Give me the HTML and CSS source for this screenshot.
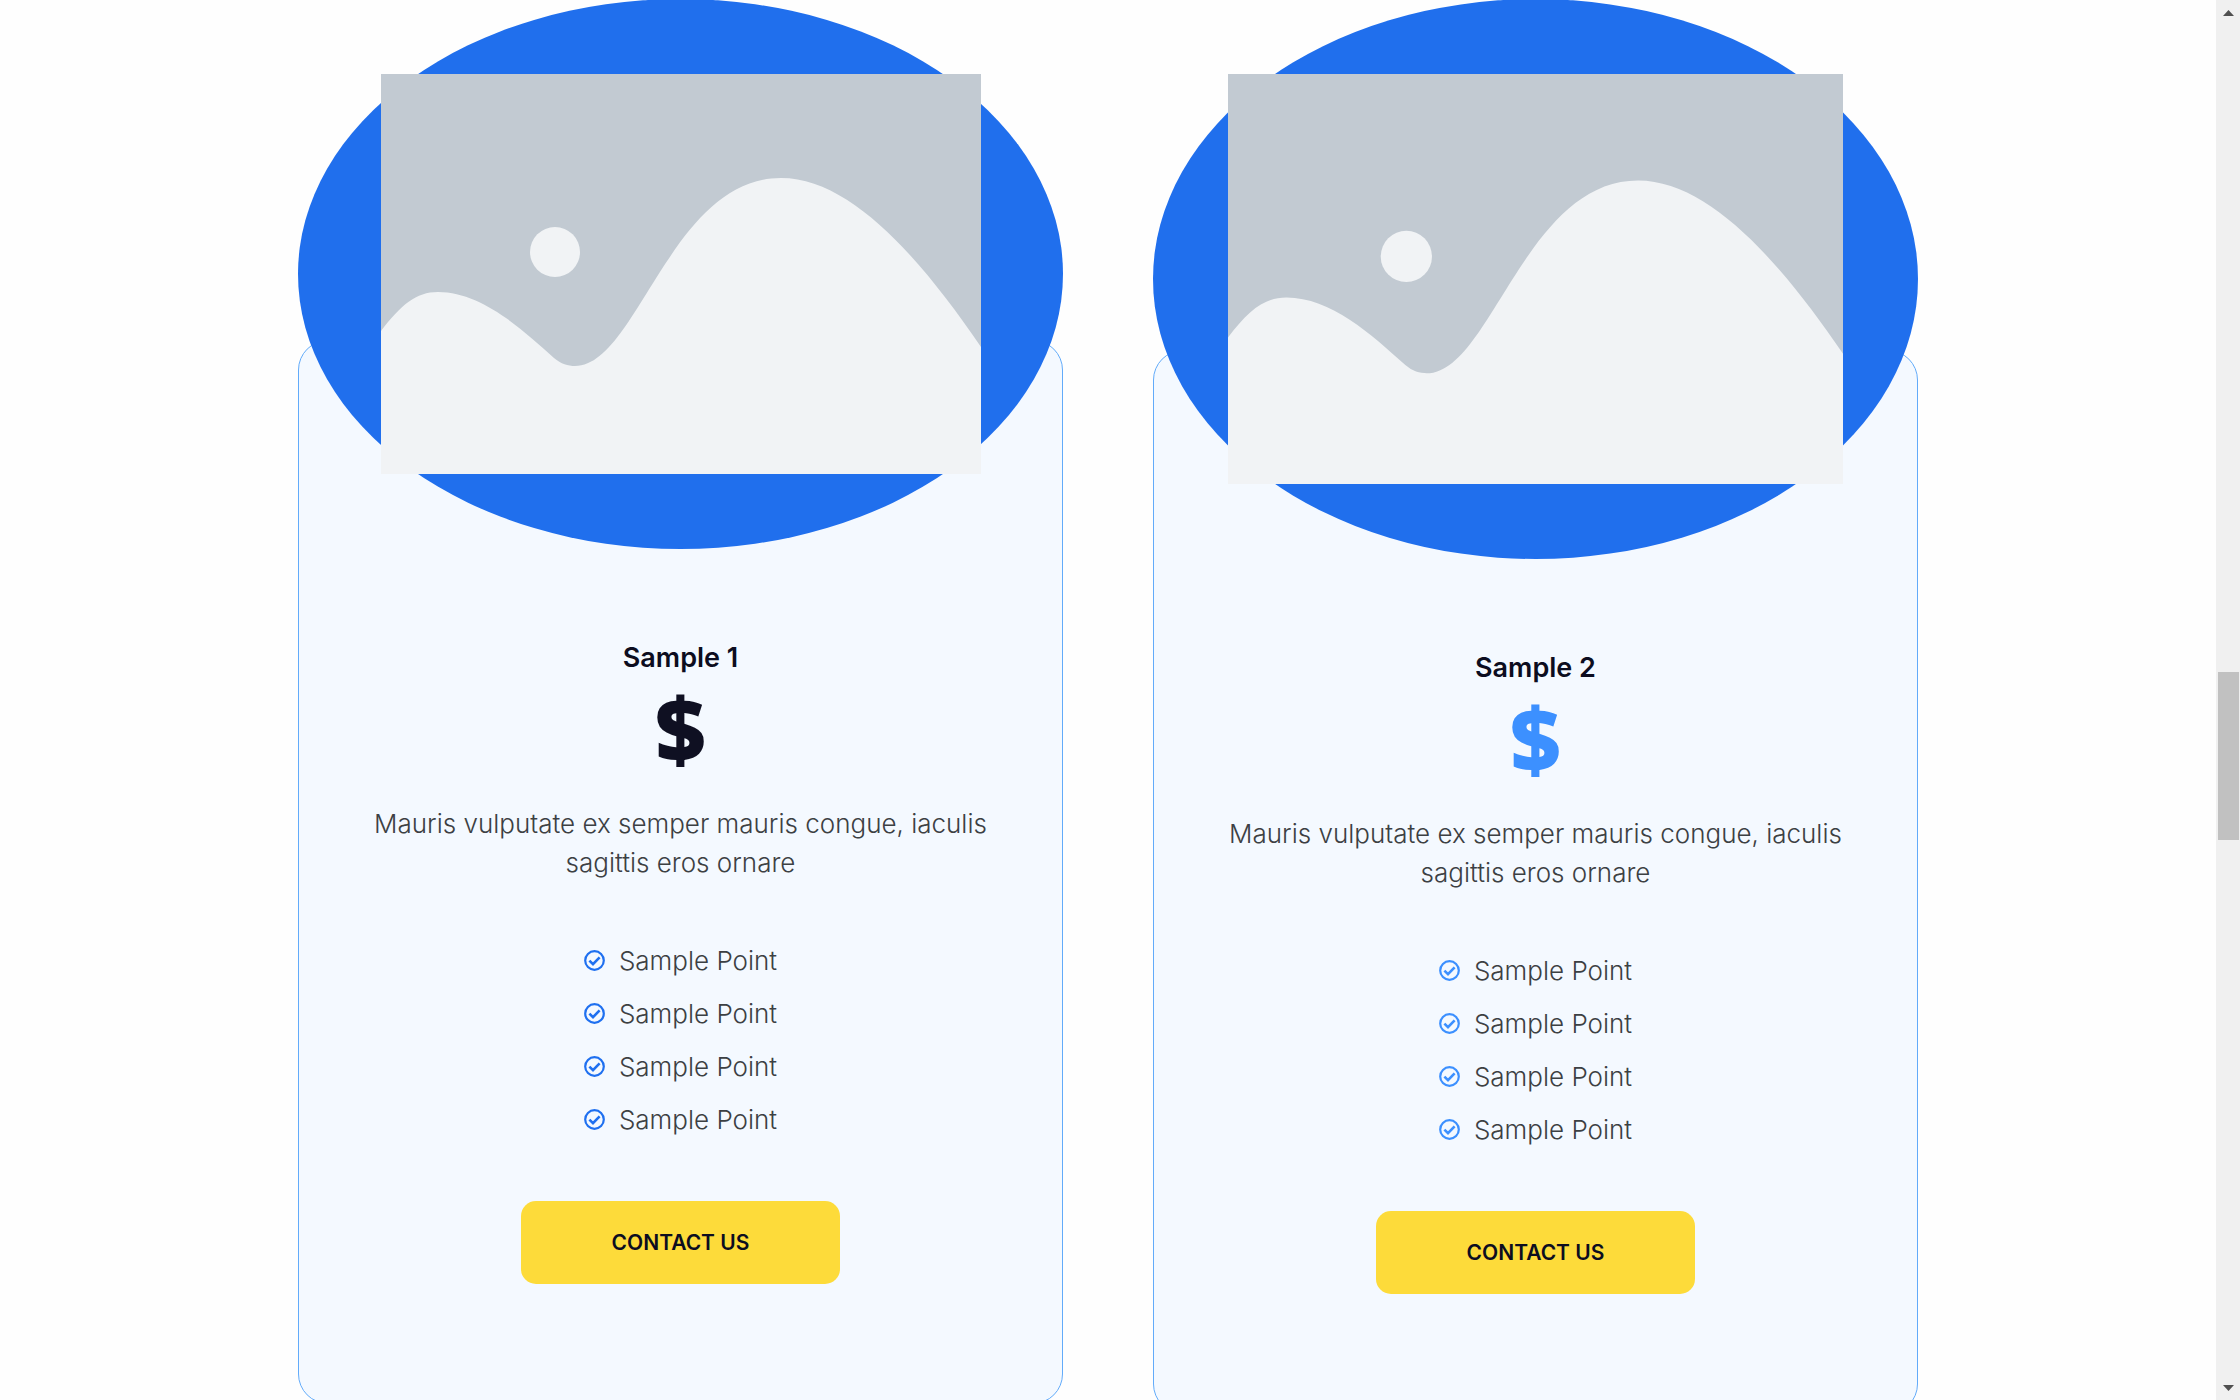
FILE: index.html
```
<!DOCTYPE html>
<html lang="en">
<head>
    <meta charset="UTF-8">
    <meta name="viewport" content="width=device-width, initial-scale=1.0">
    <title>Samples</title>
    <link rel="stylesheet" href="styles.css">
</head>
<body>
    <svg class="symbols" aria-hidden="true">
        <symbol id="placeholder" viewBox="0 0 600 400">
            <rect width="600" height="400" fill="#c2cad2"/>
            <circle cx="174" cy="178" r="25" fill="#f1f3f5"/>
            <path fill="#f1f3f5" d="M0 257C20 231 35 218 57 218C100 218 140 254 173 284C180 290 187 292 194 292C256 292 290 104 400 104C470 104 540 185 600 273V400H0Z"/>
        </symbol>
        <symbol id="check" viewBox="0 0 21 21">
            <circle cx="10.5" cy="10.5" r="9.3" fill="none" stroke="currentColor" stroke-width="2.2"/>
            <path d="M5.4 10.6L9 14.2L15.6 7.4" fill="none" stroke="currentColor" stroke-width="2.6"/>
        </symbol>
    </svg>

    <main class="page">
        <div class="cards">
            <article class="card">
                <div class="card-image">
                    <svg viewBox="0 0 600 400"><use href="#placeholder"/></svg>
                </div>
                <h3>Sample 1</h3>
                <div class="price">$</div>
                <p>Mauris vulputate ex semper mauris congue, iaculis sagittis eros ornare</p>
                <ul class="points">
                    <li><svg><use href="#check"/></svg>Sample Point</li>
                    <li><svg><use href="#check"/></svg>Sample Point</li>
                    <li><svg><use href="#check"/></svg>Sample Point</li>
                    <li><svg><use href="#check"/></svg>Sample Point</li>
                </ul>
                <button type="button" class="btn">CONTACT US</button>
            </article>

            <article class="card card-alt">
                <div class="card-image">
                    <svg viewBox="0 0 600 400"><use href="#placeholder"/></svg>
                </div>
                <h3>Sample 2</h3>
                <div class="price">$</div>
                <p>Mauris vulputate ex semper mauris congue, iaculis sagittis eros ornare</p>
                <ul class="points">
                    <li><svg><use href="#check"/></svg>Sample Point</li>
                    <li><svg><use href="#check"/></svg>Sample Point</li>
                    <li><svg><use href="#check"/></svg>Sample Point</li>
                    <li><svg><use href="#check"/></svg>Sample Point</li>
                </ul>
                <button type="button" class="btn">CONTACT US</button>
            </article>
        </div>
    </main>

    <div class="scrollbar" aria-hidden="true">
        <svg viewBox="0 0 11 6"><path d="M0 6L5.5 0L11 6Z"/></svg>
        <div class="track">
            <div class="thumb"></div>
        </div>
        <svg viewBox="0 0 11 6"><path d="M0 0L5.5 6L11 0Z"/></svg>
    </div>
</body>
</html>
```
FILE: styles.css
```
* {
    box-sizing: border-box;
}
body {
    margin: 0;
    height: 100vh;
    display: flex;
    overflow: hidden;
    background: #fefefe;
    color: #3c4043;
    font-family: Inter, 'Open Sans', sans-serif;
}
.symbols {
    display: none;
}
.page {
    flex: 1;
    height: 100vh;
    overflow: hidden;
}
.cards {
    display: grid;
    grid-template-columns: 1fr 1fr;
    gap: 90px;
    align-items: start;
    max-width: 1620px;
    margin: 0 auto;
}
.card {
    display: flex;
    flex-direction: column;
    align-items: center;
    margin-top: 340px;
    padding: 0 74px 119px;
    background: #f4f9ff;
    border: 1px solid #62abfa;
    border-radius: 30px;
    text-align: center;
}
/* image sits on a blue ellipse that sticks out above the card */
.card-image {
    align-self: stretch;
    margin: -342px -75px 0;
    padding: 75px;
    background: #206fed;
    border-radius: 50%;
}
.card-image svg {
    display: block;
    width: 100%;
    max-width: 600px;
    margin: 0 auto;
}
.card h3 {
    margin: 89px 0 5px;
    color: #0c0d20;
    font-size: 27px;
    font-weight: 600;
    line-height: 40px;
}
.price {
    color: #0f1022;
    font-family: 'Open Sans', sans-serif;
    font-size: 88px;
    font-weight: 800;
    line-height: 90px;
}
.card p {
    margin: 31px 0 59px;
    font-size: 26px;
    font-weight: 300;
    line-height: 39px;
}
.points {
    display: flex;
    flex-direction: column;
    gap: 14px;
    margin: 0 0 62px;
    padding: 0;
    list-style: none;
    font-size: 26px;
    font-weight: 300;
    line-height: 39px;
}
.points li {
    display: flex;
    align-items: center;
    gap: 14px;
}
.points svg {
    width: 21px;
    height: 21px;
    color: #1f70f0;
}
.btn {
    width: 319px;
    height: 83px;
    border: 0;
    border-radius: 15px;
    background: #fddb3a;
    color: #0c0d20;
    font-family: inherit;
    font-size: 21px;
    font-weight: 600;
    cursor: pointer;
}
/* second card has a slightly larger image */
.card-alt {
    margin-top: 350px;
}
.card-alt .card-image {
    margin-top: -352px;
}
.card-alt .card-image svg {
    max-width: none;
}
.card-alt .price,
.card-alt .points svg {
    color: #3c90ff;
}
.scrollbar {
    display: flex;
    flex-direction: column;
    align-items: center;
    width: 24px;
    height: 100vh;
    padding: 10px 1px 9px 2px;
    background: #f0f0f0;
}
.scrollbar svg {
    width: 11px;
    height: 6px;
    fill: #505050;
}
.track {
    flex: 1;
    align-self: stretch;
    display: flex;
    flex-direction: column;
    padding-top: 656px;
}
.thumb {
    height: 168px;
    background: #c1c1c1;
}
```
